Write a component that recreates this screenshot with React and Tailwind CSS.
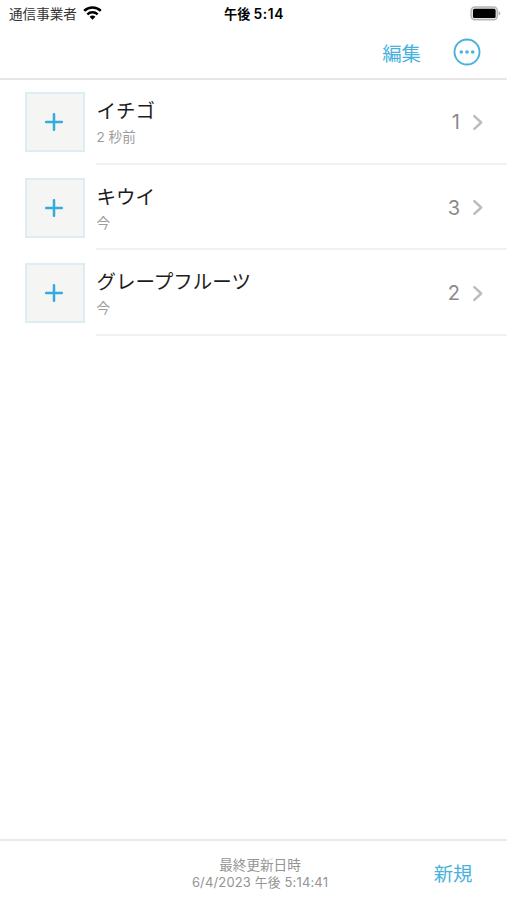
import React, {useState} from 'react';

const updated_label = '最終更新日時';
const updated_at = '6/4/2023';

const fruits = [
    {name: 'イチゴ', when: '2 秒前', count: 1},
    {name: 'キウイ', when: '今', count: 3},
    {name: 'グレープフルーツ', when: '今', count: 2},
];

const Wifi = () => (
    <svg className="ml-1.5 h-[15px] w-[19px]" viewBox="0 0 19 15" fill="none">
        <path d="M1.2 4.9C5.9 .4 13.1 .4 17.8 4.9" stroke="#000" strokeWidth="2.6"/>
        <path d="M4.3 8.3C7.3 5.5 11.7 5.5 14.7 8.3" stroke="#000" strokeWidth="2.4"/>
        <path d="M9.5 13.7L6.6 10.8C8.2 9.2 10.8 9.2 12.4 10.8Z" fill="#000"/>
    </svg>
);

const Battery = () => (
    <svg className="h-[16px] w-[32px]" viewBox="0 0 32 16" fill="none">
        <rect x="1.1" y="1" width="26.3" height="12.8" rx="3.8" fill="#e2e2e2" stroke="#b5b5b5" strokeWidth="1.4"/>
        <rect x="3" y="2.8" width="22.6" height="9.2" rx="1.6" fill="#000"/>
        <path d="M28.6 5.2C31 5.9 31 8.9 28.6 9.6Z" fill="#b5b5b5"/>
    </svg>
);

const StatusBar = () => (
    <div className="grid h-[27px] grid-cols-[1fr_auto_1fr] items-center text-[13.6px] text-[#333]">
        <div className="flex items-center pl-[9px]">
            <span className="pt-[2px]">通信事業者</span>
            <Wifi/>
        </div>
        <div className="flex items-center pt-px pl-px font-bold text-black">
            <span className="pt-px text-[13.2px]">午後</span>
            <span className="ml-[3px] text-[13.8px] font-semibold tracking-[0.6px]">5:14</span>
        </div>
        <div className="flex justify-end pr-[5px]">
            <Battery/>
        </div>
    </div>
);

const Row = ({item}) => (
    <li className="flex h-[85.5px] pl-[25px]">
        <button className="mt-[13px] flex h-[60px] w-[59.5px] shrink-0 items-center justify-center border-2 border-[#dceef4] bg-[#f5f5f4] pr-px">
            <svg className="h-[18px] w-[18px]" viewBox="0 0 18 18">
                <path d="M9 1.2V16.8M1.2 9H16.8" stroke="#35aadc" strokeWidth="2.5" strokeLinecap="round"/>
            </svg>
        </button>
        <div className="ml-[11.5px] flex flex-1 border-b-2 border-[#f1f1f1]">
            <div className="flex-1 pt-[19px] pl-[0.5px]">
                <p className="text-[19.5px] leading-[27px] text-[#1c1c1c]">{item.name}</p>
                <p className="mt-px text-[13.6px] leading-[22px] text-[#9c9c9c]">{item.when}</p>
            </div>
            <div className="flex items-center pr-[23.5px] pt-[3px]">
                <span className="text-[20px] text-[#8a8a8d]">{item.count}</span>
                <svg className="ml-[11.5px] h-[17px] w-[12px]" viewBox="0 0 12 17" fill="none">
                    <path d="M2.3 2.1L9.2 8.5L2.3 14.9" stroke="#bcbcbe" strokeWidth="2.4" strokeLinecap="round" strokeLinejoin="round"/>
                </svg>
            </div>
        </div>
    </li>
);

function App() {
    const [items] = useState(fruits);

    return (
        <div className="flex h-screen flex-col bg-white font-[Inter,'Noto_Sans_CJK_JP',sans-serif]">
            <header className="h-20 border-b-2 border-[#e6e6e6]">
                <StatusBar/>
                <div className="flex h-[50px] items-center justify-end pr-[26.5px] text-[#48b2de]">
                    <button className="pt-[5px] text-[19.4px]">編集</button>
                    <button className="ml-[31.5px]">
                        <svg className="h-[28px] w-[28px]" viewBox="0 0 28 28" fill="none">
                            <circle cx="14" cy="14" r="12.5" stroke="currentColor" strokeWidth="1.9"/>
                            <circle cx="8.3" cy="14" r="1.8" fill="currentColor"/>
                            <circle cx="14" cy="14" r="1.8" fill="currentColor"/>
                            <circle cx="19.7" cy="14" r="1.8" fill="currentColor"/>
                        </svg>
                    </button>
                </div>
            </header>

            <ul className="-mt-px flex-1">
                {items.map((item) => <Row key={item.name} item={item}/>)}
            </ul>

            <footer className="grid h-[61px] grid-cols-[1fr_auto_1fr] items-center border-t-2 border-[#eaeaea]">
                <div className="col-start-2 pt-[6px] pl-[13px] text-center text-[13.6px] leading-[17px] text-[#949494]">
                    <p>{updated_label}</p>
                    <p className="text-[13px] tracking-[0.15px]">{updated_at} <span className="text-[12.8px]">午後</span> 5:14:41</p>
                </div>
                <button className="justify-self-end pr-[34.5px] pt-[8px] text-[19.4px] text-[#48b2de]">新規</button>
            </footer>
        </div>
    );
}

export default App;
